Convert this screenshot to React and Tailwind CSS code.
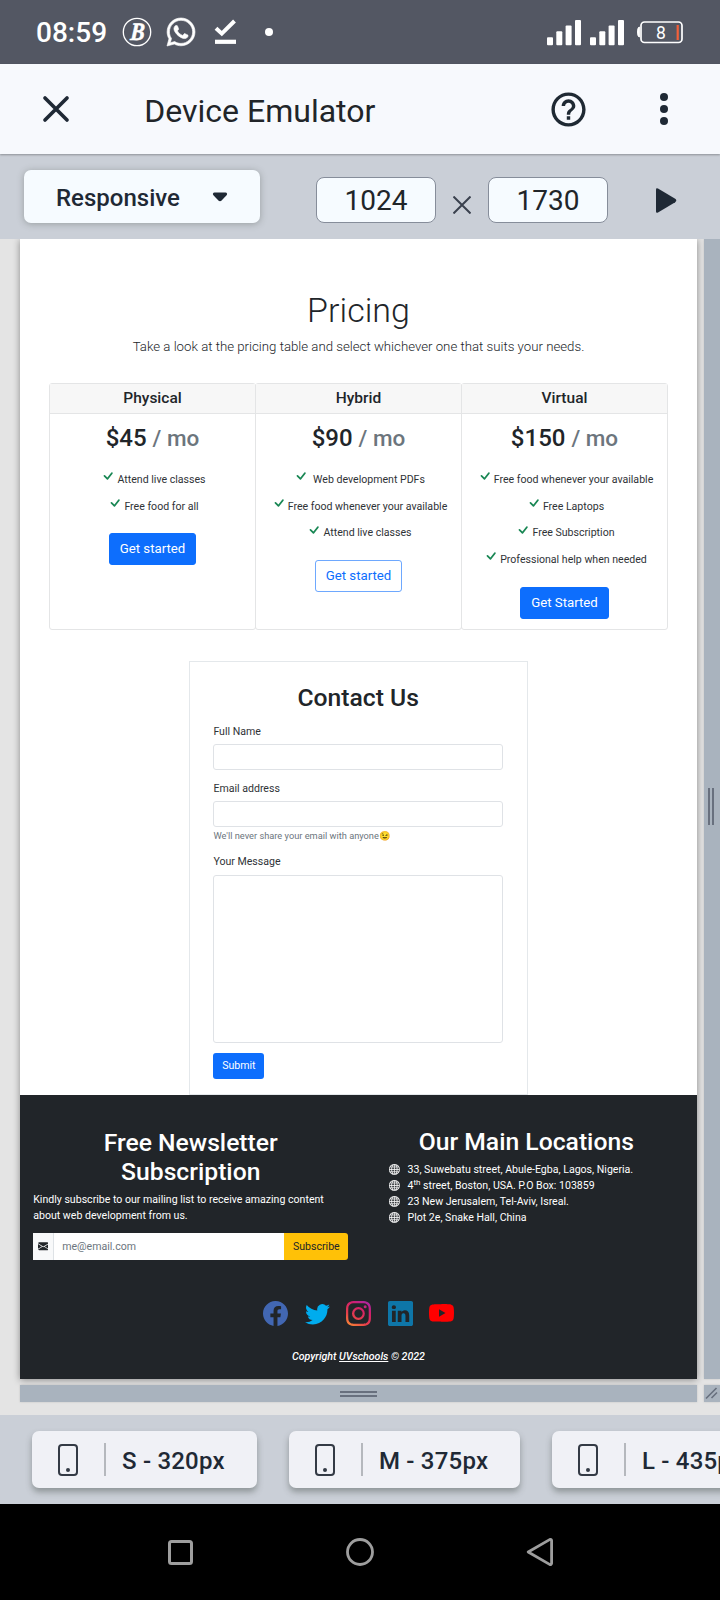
import React from "react";
import {
  BsCheck,
  BsEnvelopeFill,
  BsFacebook,
  BsGlobe,
  BsInstagram,
  BsLinkedin,
  BsTwitter,
  BsYoutube,
} from "react-icons/bs";
import { FaWhatsapp } from "react-icons/fa";
import { MdHelpOutline } from "react-icons/md";

function SignalBars() {
  return (
    <svg width="34" height="26" viewBox="0 0 34 26" fill="#fff">
      <rect x="0" y="17.3" width="6" height="8" rx="1" />
      <rect x="9.3" y="11.3" width="6" height="14" rx="1" />
      <rect x="18.6" y="5.6" width="6" height="19.7" rx="1" />
      <rect x="28" y="0" width="6" height="25.3" rx="1" />
    </svg>
  );
}

function StatusBar() {
  return (
    <div className="flex h-16 shrink-0 items-center bg-[#535763] pl-[36px] pr-[37px] text-white">
      <span className="w-[86px] pt-[2px] text-[28px] font-medium leading-8">08:59</span>
      <svg className="mr-[14px]" width="30" height="30" viewBox="0 0 30 30">
        <circle cx="15" cy="15" r="13.7" fill="none" stroke="#fff" strokeWidth="1.3" />
        <text x="0" y="0" transform="translate(15 23) scale(0.85 1) skewX(-5)" textAnchor="middle" fontFamily="Liberation Serif, serif" fontStyle="italic" fontWeight="700" fontSize="25" fill="#fff" stroke="#fff" strokeWidth="0.6">B</text>
      </svg>
      <FaWhatsapp className="mr-[17px] -ml-px size-8 stroke-white [stroke-width:10]" />
      <svg className="mr-[28px]" width="23" height="26" viewBox="0 0 23 26" fill="none" stroke="#fff">
        <path d="M2 9.2 L7.8 14.6 L20.5 2" strokeWidth="4" />
        <path d="M1 22.8 H22" strokeWidth="4.2" />
      </svg>
      <span className="size-2 rounded-full bg-white" />
      <div className="ml-auto flex items-center pt-[2px]">
        <SignalBars />
        <span className="w-[9px]" />
        <SignalBars />
        <svg className="-mt-[3px] ml-[12.5px]" width="47" height="24" viewBox="0 0 47 24">
          <path d="M3.4 7 Q1.5 7 1.5 12 Q1.5 17 3.4 17 Z" fill="#fff" stroke="#fff" strokeWidth="1" />
          <rect x="5" y="2" width="41" height="20.5" rx="3.5" fill="none" stroke="#fff" strokeWidth="1.7" />
          <rect x="40.6" y="5" width="2.2" height="15" fill="#f4603a" />
          <text x="25" y="18.5" textAnchor="middle" fontFamily="Roboto, sans-serif" fontSize="17.5" fill="#fff">8</text>
        </svg>
      </div>
    </div>
  );
}

function TitleBar() {
  return (
    <div className="z-10 flex h-[90px] shrink-0 items-center bg-[#f7f9fd] pl-[42px] pr-[52px] text-[#1f2933] shadow-[0_1px_2px_rgba(0,0,0,0.3)]">
      <svg width="28" height="28" viewBox="0 0 28 28" stroke="#1f2935" strokeWidth="3.7" strokeLinecap="round">
        <path d="M3 3 L25 25 M25 3 L3 25" />
      </svg>
      <h1 className="ml-[74.3px] mt-[4px] text-[32px] leading-10 text-[#212529]">Device Emulator</h1>
      <MdHelpOutline className="ml-auto size-[41px]" />
      <svg className="ml-[71.5px]" width="8" height="32" viewBox="0 0 8 32" fill="#1f2935">
        <circle cx="4" cy="4" r="4" />
        <circle cx="4" cy="16" r="4" />
        <circle cx="4" cy="28" r="4" />
      </svg>
    </div>
  );
}

function SizeField({ value }) {
  return (
    <div className="flex h-[46px] w-[120px] items-center justify-center rounded-[8px] border border-[#868d9a] bg-[#f6fbff] pt-[2.5px] text-[28px] leading-8 text-[#212529]">
      {value}
    </div>
  );
}

function Toolbar() {
  return (
    <div className="z-[5] flex h-[85px] shrink-0 items-start bg-[#cacfd7] pl-6 pt-4">
      <button className="flex h-[53px] w-[236px] items-center rounded-[7px] bg-[#f6fbff] pl-[32px] pr-[32px] text-[24px] font-medium leading-7 text-[#1f2935] shadow-[0_1px_7px_rgba(60,70,60,0.35)]">
        <span className="pt-[2px]">Responsive</span>
        <svg className="ml-auto mt-px" width="16" height="10" viewBox="0 0 16 10" fill="#1f2935">
          <path d="M2.5 .5 H13.5 Q15.8 1 14.8 3 L9.6 8.4 Q8 10 6.4 8.4 L1.2 3 Q.2 1 2.5 .5Z" />
        </svg>
      </button>
      <div className="ml-[56px] mt-[7px] flex items-center">
        <SizeField value="1024" />
        <svg className="ml-[17px] mr-[17px] mt-[9px]" width="18" height="18" viewBox="0 0 18 18" stroke="#3a414e" strokeWidth="2">
          <path d="M.5 .5 L17.5 17.5 M17.5 .5 L.5 17.5" />
        </svg>
        <SizeField value="1730" />
      </div>
      <svg className="ml-[48px] mt-[17.5px]" width="21" height="25" viewBox="0 0 21 25" fill="#1f2935">
        <path d="M0 1.6 Q0 -.2 2 .6 L19.2 10.8 Q21.4 12.5 19.2 14.2 L2 24.4 Q0 25.2 0 23.4Z" />
      </svg>
    </div>
  );
}

const plans = [
  { name: "Physical", price: "$45", features: ["Attend live classes", "Free food for all"], action: "Get started" },
  {
    name: "Hybrid",
    price: "$90",
    features: ["Web development PDFs", "Free food whenever your available", "Attend live classes"],
    action: "Get started",
    outline: true,
  },
  {
    name: "Virtual",
    price: "$150",
    features: ["Free food whenever your available", "Free Laptops", "Free Subscription", "Professional help when needed"],
    action: "Get Started",
  },
];

function PlanCard({ plan }) {
  return (
    <div className="-ml-px flex flex-1 flex-col items-center rounded-[3px] border border-[#e4e5e6]">
      <h4 className="flex h-[29.5px] w-full items-center justify-center border-b border-[#e4e5e6] bg-[#f7f7f7] text-[15.5px] font-medium leading-5">
        {plan.name}
      </h4>
      <div className="mt-[10px] text-[24px] font-medium leading-[28px]">
        {plan.price} <span className="text-[22.5px] text-[#6c757d]">/ mo</span>
      </div>
      <ul className="mb-[13.5px] mt-[15px] text-[10.58px] text-[#2f3337]">
        {plan.features.map((f) => (
          <li key={f} className="flex h-[26.67px] items-center justify-center whitespace-nowrap">
            <BsCheck className={f.startsWith("Web") ? "mb-[7px] mr-[3px] size-[18px] text-[#198754]" : "mb-[7px] size-[18px] text-[#198754]"} />
            {f}
          </li>
        ))}
      </ul>
      <button
        className={
          plan.outline
            ? "h-[32px] rounded-[3px] border border-[#0d6efd]/60 px-[10px] text-[13.22px] text-[#0d6efd]"
            : "h-[32px] rounded-[3px] border border-[#0d6efd] bg-[#0d6efd] px-[10px] text-[13.22px] text-white"
        }
      >
        {plan.action}
      </button>
    </div>
  );
}

function Pricing() {
  return (
    <section className="px-[29px] pt-[51px] text-center">
      <h2 className="text-[34px] font-light leading-[40px]">Pricing</h2>
      <p className="mt-[7px] text-[13.22px] font-light leading-[20px]">
        Take a look at the pricing table and select whichever one that suits your needs.
      </p>
      <div className="mt-[26px] flex h-[247px] pl-px">
        {plans.map((p) => (
          <PlanCard key={p.name} plan={p} />
        ))}
      </div>
    </section>
  );
}

function Contact() {
  return (
    <section className="mx-auto mt-[31px] h-[433.5px] w-[339px] border border-[#e4e8eb] pl-[23.4px] pr-[24px] pt-[21px] text-[10.58px] leading-4 text-[#2f3337]">
      <h2 className="text-center text-[24.7px] font-medium leading-[30px] text-[#212529]">Contact Us</h2>
      <label className="mt-[11px] block">Full Name</label>
      <div className="mt-[3.5px] h-[26px] rounded-[3px] border border-[#dfe2e6]" />
      <label className="mt-[11.5px] block">Email address</label>
      <div className="mt-[3.5px] h-[26px] rounded-[3px] border border-[#dfe2e6]" />
      <p className="mt-px h-4 text-[9.26px] text-[#6c757d]">We'll never share your email with anyone😉</p>
      <label className="mt-[10.5px] block">Your Message</label>
      <div className="mt-[4.5px] h-[168px] rounded-[3px] border border-[#dfe2e6]" />
      <button className="mt-[10px] h-[26px] w-[51px] rounded-[3px] bg-[#0d6efd] pt-px text-white">Submit</button>
    </section>
  );
}

const locations = [
  "33, Suwebatu street, Abule-Egba, Lagos, Nigeria.",
  <span key="boston">
    4<sup className="relative -top-[3.5px] align-baseline text-[8px] leading-none">th</sup> street, Boston, USA. P.O Box: 103859
  </span>,
  "23 New Jerusalem, Tel-Aviv, Isreal.",
  "Plot 2e, Snake Hall, China",
];

function Footer() {
  return (
    <footer className="flex h-[284px] flex-col bg-[#212529] px-[13.2px] pt-[33px] text-[10.58px] text-white">
      <div className="flex h-[173px] gap-[20.4px]">
        <div className="flex-1">
          <h3 className="text-center text-[24.7px] font-medium leading-[29.2px]">
            Free Newsletter
            <br />
            Subscription
          </h3>
          <p className="mt-[6.2px] leading-[15.9px]">
            Kindly subscribe to our mailing list to receive amazing content about web development from us.
          </p>
          <div className="mt-[9px] flex h-[27px]">
            <span className="flex w-[21px] items-center justify-center border-r border-[#dee2e6] bg-[#f8f9fa] text-[#212529]">
              <BsEnvelopeFill className="size-[10.6px]" />
            </span>
            <span className="flex flex-1 items-center bg-white pl-[8px] pt-px text-[#6c757d]">me@email.com</span>
            <button className="w-[64px] rounded-r-[3px] bg-[#ffc107] pt-px text-[#212529]">Subscribe</button>
          </div>
        </div>
        <div className="flex-1">
          <h3 className="text-center text-[24.7px] font-medium leading-[28.8px]">Our Main Locations</h3>
          <ul className="mt-[5.5px] pl-[20px]">
            {locations.map((l, i) => (
              <li key={i} className="flex h-[16px] items-center leading-[16px]">
                <BsGlobe className="mb-px mr-[8px] size-[10.8px] stroke-white [stroke-width:0.3]" />
                {l}
              </li>
            ))}
          </ul>
        </div>
      </div>
      <svg width="0" height="0" className="absolute">
        <defs>
          <linearGradient id="insta" x1="0.1" y1="1" x2="0.7" y2="0">
            <stop offset="0" stopColor="#fb8c34" />
            <stop offset="0.35" stopColor="#e6404a" />
            <stop offset="0.75" stopColor="#d31f6b" />
            <stop offset="1" stopColor="#b0259c" />
          </linearGradient>
        </defs>
      </svg>
      <div className="flex justify-center gap-[16.5px]">
        <BsFacebook className="size-[25px] text-[#4267b2]" />
        <BsTwitter className="size-[25px] text-[#00acee]" />
        <BsInstagram className="size-[25px] fill-[url(#insta)]" />
        <BsLinkedin className="size-[25px] text-[#0e76a8]" />
        <BsYoutube className="size-[25px] text-[#ff0000]" />
      </div>
      <p className="mt-[23.5px] text-center font-medium italic leading-4">
        Copyright <span className="underline">UVschools</span> © 2022
      </p>
    </footer>
  );
}

function Workspace() {
  return (
    <div className="flex h-[1176px] shrink-0 gap-[7px] bg-[#e4e4e4] pl-5">
      <div className="flex w-[677px] flex-col">
        <div className="flex h-[1139.5px] flex-col bg-white text-[#212529] shadow-[0_1px_7px_rgba(0,0,0,0.4)]">
          <Pricing />
          <Contact />
          <Footer />
        </div>
        <div className="mt-[6.5px] flex h-[17px] flex-col items-center justify-center gap-[2px] bg-[#a9b3be] shadow-[0_0_2px_rgba(0,0,0,0.15)]">
          <span className="h-[2px] w-[37px] bg-[#68707e]" />
          <span className="h-[2px] w-[37px] bg-[#68707e]" />
        </div>
      </div>
      <div className="flex w-4 flex-col">
        <div className="flex h-[1139.5px] gap-[2px] bg-[#a9b3be] pl-[4px] pt-[549px] shadow-[0_0_2px_rgba(0,0,0,0.15)]">
          <span className="h-[37px] w-[2px] bg-[#68707e]" />
          <span className="h-[37px] w-[2px] bg-[#68707e]" />
        </div>
        <div className="mt-[6.5px] h-[17px] bg-[#a9b3be] shadow-[0_0_2px_rgba(0,0,0,0.15)]">
          <svg width="16" height="17" viewBox="0 0 16 17" stroke="#68707e" strokeWidth="1.6">
            <path d="M2 13.5 L12.5 3 M7.5 13 L13 7.5" />
          </svg>
        </div>
      </div>
    </div>
  );
}

function Preset({ label, width }) {
  return (
    <div className={`flex h-[57px] shrink-0 items-center rounded-[7px] bg-[#f0f1f6] pl-[26px] shadow-[0_4px_6px_rgba(70,80,75,0.45)] ${width}`}>
      <svg width="20" height="32" viewBox="0 0 20 32">
        <rect x="1" y="1" width="18" height="30" rx="3" fill="none" stroke="#333a45" strokeWidth="2" />
        <circle cx="10" cy="26" r="2" fill="#333a45" />
      </svg>
      <span className="ml-[26px] mr-[16px] h-[33px] w-[2px] bg-[#b5b8bd]" />
      <span className="whitespace-nowrap pt-[2px] text-[24px] font-medium leading-7 tracking-[0.2px] text-[#1f2935]">{label}</span>
    </div>
  );
}

function Presets() {
  return (
    <div className="flex h-[89px] shrink-0 gap-8 overflow-hidden bg-[#cacfd7] pl-8 pt-4">
      <Preset label="S - 320px" width="w-[225px]" />
      <Preset label="M - 375px" width="w-[231px]" />
      <Preset label="L - 435px" width="w-[225px]" />
    </div>
  );
}

function NavBar() {
  return (
    <div className="flex h-24 shrink-0 items-center gap-[152px] bg-black pl-[167px]">
      <svg width="27" height="27" viewBox="0 0 27 27" fill="none" stroke="#9e9e9e" strokeWidth="3">
        <rect x="2.5" y="2.5" width="22" height="22" rx="2" />
      </svg>
      <svg width="28" height="28" viewBox="0 0 28 28" fill="none" stroke="#9e9e9e" strokeWidth="2.8">
        <circle cx="14" cy="14" r="12.5" />
      </svg>
      <svg width="28" height="28" viewBox="0 0 28 28" fill="none" stroke="#9e9e9e" strokeWidth="2.8" strokeLinejoin="round">
        <path d="M2.2 14 L23.6 1.6 Q25.4 1 25.6 2.6 V25.4 Q25.4 27 23.6 26.4Z" />
      </svg>
    </div>
  );
}

export default function App() {
  return (
    <div className="flex h-[1600px] w-[720px] flex-col overflow-hidden font-['Roboto',sans-serif]">
      <StatusBar />
      <TitleBar />
      <Toolbar />
      <Workspace />
      <Presets />
      <NavBar />
    </div>
  );
}
